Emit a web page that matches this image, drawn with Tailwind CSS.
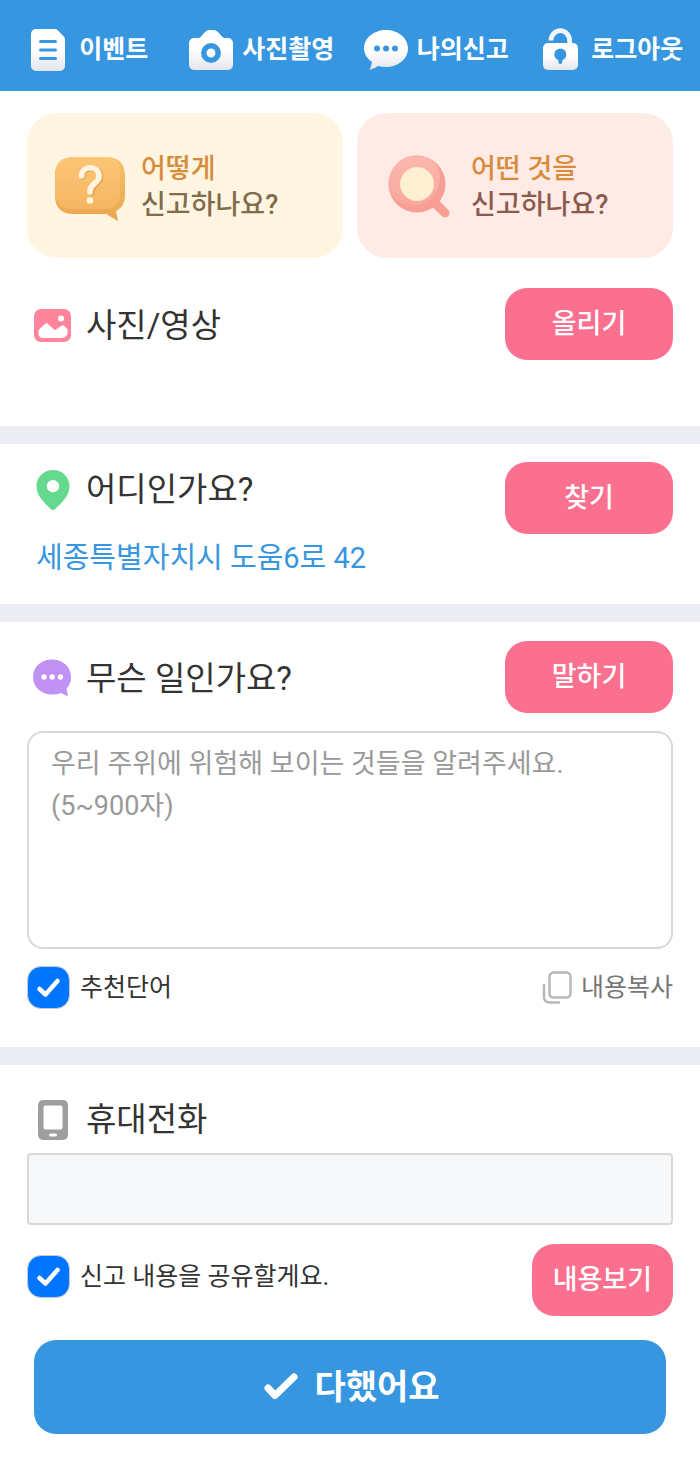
<!DOCTYPE html>
<html lang="ko">
<head>
  <meta charset="UTF-8" />
  <meta name="viewport" content="width=device-width, initial-scale=1.0" />
  <title>안전신고</title>
  <script src="https://cdn.jsdelivr.net/npm/@tailwindcss/browser@4"></script>
</head>
<body class="bg-white font-[Roboto,'Noto_Sans_CJK_KR',sans-serif] text-[#333333]">

  <!-- Top menu -->
  <header class="bg-[#3796e0] text-white">
    <nav class="grid h-[91px] grid-cols-4 pt-2 pr-[2px] text-[25px] font-bold whitespace-nowrap">
      <a href="#" class="flex items-center justify-center gap-[9px]">
        <svg class="h-[44px] w-[44px] shrink-0" viewBox="0 0 44 44" fill="none">
          <defs>
            <linearGradient id="white" x1="0" y1="0" x2="0" y2="1">
              <stop offset="0.5" stop-color="#ffffff" />
              <stop offset="1" stop-color="#e3e5ec" />
            </linearGradient>
          </defs>
          <path d="M10 1h18.500q2 0 3.400 1.400l5.700 5.800q1.400 1.400 1.400 3.400V38a5 5 0 0 1-5 5H10a5 5 0 0 1-5-5V6a5 5 0 0 1 5-5z" fill="url(#white)" />
          <path d="M14.500 13.500h15M14.500 22h15M14.500 30.500h15" stroke="#3796e0" stroke-width="3" stroke-linecap="round" />
        </svg>
        <span>이벤트</span>
      </a>
      <a href="#" class="flex items-center justify-center gap-[9px]">
        <svg class="h-[44px] w-[44px] shrink-0" viewBox="0 0 44 44" fill="none">
          <path d="M5 10h4q1.500 0 2.500-1l4.500-5q2-2 4.500-2h4q2.500 0 4.500 2l4.500 5q1 1 2.500 1h3a5 5 0 0 1 5 5v22a5 5 0 0 1-5 5H5a5 5 0 0 1-5-5V15a5 5 0 0 1 5-5z" fill="url(#white)" />
          <circle cx="22" cy="25" r="7.200" stroke="#3796e0" stroke-width="5.500" />
        </svg>
        <span>사진촬영</span>
      </a>
      <a href="#" class="flex items-center justify-center gap-[9px]">
        <svg class="h-[44px] w-[44px] shrink-0" viewBox="0 0 44 44">
          <path d="M22 2c12 0 22 8 22 18.500S34 39 22 39q-4.500 0-8-1-3 2.500-8.500 4 2-4 2.500-8Q0 28.500 0 20.500C0 10 10 2 22 2z" fill="url(#white)" />
          <g fill="#3796e0"><circle cx="13" cy="20.500" r="3" /><circle cx="22" cy="20.500" r="3" /><circle cx="31" cy="20.500" r="3" /></g>
        </svg>
        <span>나의신고</span>
      </a>
      <a href="#" class="flex items-center justify-center gap-[9px]">
        <svg class="h-[44px] w-[44px] shrink-0" viewBox="0 0 44 44" fill="none">
          <path d="M13 12.500a9.300 9.800 0 0 1 18.600 0V18" stroke="#f4f6fb" stroke-width="4.800" />
          <rect x="5" y="15" width="35" height="27" rx="5" fill="url(#white)" />
          <circle cx="22.300" cy="26.500" r="6" fill="#3796e0" />
          <path d="M22.300 28v6" stroke="#3796e0" stroke-width="4" stroke-linecap="round" />
        </svg>
        <span>로그아웃</span>
      </a>
    </nav>
  </header>

  <main>
    <!-- Guides and photo upload -->
    <section class="px-[27px] pt-[22px] pb-[66px]">
      <div class="grid grid-cols-2 gap-[14px] text-[27px] leading-[36px] font-medium whitespace-nowrap">
        <a href="#" class="flex h-[145px] items-center gap-4 rounded-[30px] bg-[#fff5e1] pt-[2px] pl-[27px]">
          <svg class="h-[71px] w-[71px] shrink-0" viewBox="0 0 71 71" fill="none">
            <defs>
              <linearGradient id="orange" x1="0" y1="0" x2="0" y2="1">
                <stop stop-color="#fdc577" />
                <stop offset="1" stop-color="#f5b662" />
              </linearGradient>
              <linearGradient id="orange-edge" x1="0" y1="0" x2="0" y2="1">
                <stop stop-color="#fabf70" />
                <stop offset="1" stop-color="#eaa64b" />
              </linearGradient>
            </defs>
            <path d="M20 6h32c12 0 19 6 19 18v19c0 9-3 14-9 17l2 10-12-7H20C8 63 1 57 1 45V24C1 12 8 6 20 6z" fill="url(#orange-edge)" />
            <path d="M20 6h30c11 0 16 6 16 16v20c0 10-5 16-16 16H18C9 58 3 54 1 45V24C1 12 8 6 20 6z" fill="url(#orange)" />
            <path d="M28.500 26c0-11 18-11 18 0 0 8-8.500 7-8.500 15v1" stroke="#eaa64b" stroke-width="5.500" stroke-linecap="round" />
            <path d="M27.500 25c0-11 17.500-11 17.500 0 0 8-9 7-9 15v1" stroke="#fff5e1" stroke-width="5.500" stroke-linecap="round" />
            <circle cx="36" cy="49.500" r="3.300" fill="#fff5e1" />
          </svg>
          <span><span class="text-[#d78c3c]">어떻게</span><br /><span class="text-[#7f6c4b]">신고하나요?</span></span>
        </a>
        <a href="#" class="flex h-[145px] items-center gap-4 rounded-[30px] bg-[#feebe6] pt-[2px] pl-[27px]">
          <svg class="h-[71px] w-[71px] shrink-0" viewBox="0 0 71 71" fill="none">
            <defs>
              <linearGradient id="coral" x1="0" y1="0" x2="0" y2="1">
                <stop stop-color="#fbb8ad" />
                <stop offset="1" stop-color="#f9a79d" />
              </linearGradient>
            </defs>
            <path d="M49 50l12 12" stroke="#f99e94" stroke-width="9" stroke-linecap="round" />
            <circle cx="33" cy="33" r="28.500" fill="#f99e94" />
            <path d="M31 4.600c14 0 25 9 25 22 0 16-12 28-27 28C14 54.600 4.600 44 4.600 32S15 4.600 31 4.600z" fill="url(#coral)" />
            <circle cx="33" cy="33" r="16.700" fill="#fff0d4" stroke="#fde3cb" />
          </svg>
          <span><span class="text-[#d78c3c]">어떤 것을</span><br /><span class="text-[#8c5a4d]">신고하나요?</span></span>
        </a>
      </div>

      <div class="mt-[30px] flex items-center justify-between">
        <h2 class="flex items-center gap-[14px] pt-[3px] pl-[6px] text-[33px] leading-[48px]">
          <svg class="h-[40px] w-[39px] shrink-0" viewBox="0 0 39 40">
            <rect x="1" y="3" width="37" height="33" rx="7" fill="#ff859c" />
            <circle cx="28" cy="12.500" r="3" fill="#fff" />
            <path d="M5.500 25q0-1 1-2l5.500-5q1.500-1.500 3 0l6 5.500q.8.800 1.600.2l6.400-4.200q1-.7 2 .2l3 3q.8 1 .8 2.300 0 7-6.300 7H10q-4.500 0-4.500-5z" fill="#fff" />
          </svg>
          사진/영상
        </h2>
        <button type="button" class="h-[72px] w-[168px] rounded-[22px] bg-[#fb6f8f] text-[27px] font-medium text-white">올리기</button>
      </div>
    </section>

    <!-- Location -->
    <section class="flex items-start justify-between border-t-[18px] border-[#ebedf2] px-[27px] pt-[18px] pb-[22px]">
      <div class="pt-1">
        <h2 class="flex items-center gap-[14px] pl-[6px] text-[33px] leading-[48px]">
          <svg class="h-[40px] w-[39px] shrink-0" viewBox="0 0 39 40">
            <path fill-rule="evenodd" d="M20 0c9.500 0 16.500 7 16.500 16.300 0 9-7 16-14.500 22.900q-2 1.600-4 0C10.500 32.300 3.500 25.300 3.500 16.300 3.500 7 10.500 0 20 0zm0 10a6.200 6.200 0 1 0 0 12.400A6.200 6.200 0 0 0 20 10z" fill="#65d98e" />
          </svg>
          어디인가요?
        </h2>
        <p class="mt-[20px] pl-[9px] text-[29px] leading-[48px] text-[#3796e0]">세종특별자치시 도움6로 42</p>
      </div>
      <button type="button" class="h-[72px] w-[168px] rounded-[22px] bg-[#fb6f8f] text-[27px] font-medium text-white">찾기</button>
    </section>

    <!-- Report text -->
    <section class="border-t-[18px] border-[#ebedf2] px-[27px] pt-[19px] pb-[38px]">
      <div class="flex items-center justify-between">
        <h2 class="pt-[3px] text-[33px] leading-[48px]">
          <label for="content" class="flex items-center gap-[14px] pl-[6px]">
            <svg class="h-[40px] w-[39px] shrink-0" viewBox="0 0 39 40">
              <path d="M19 .500c11 0 19 7.500 19 17.500 0 6-2 9-4.500 11.500l1.500 8-7-3.500q-4 1.500-9 1.500C8 35.500 0 28 0 18S8 .500 19 .500z" fill="#bf92f4" />
              <g fill="#fff"><circle cx="11" cy="18" r="2.700" /><circle cx="19.200" cy="18" r="2.700" /><circle cx="27.500" cy="18" r="2.700" /></g>
            </svg>
            무슨 일인가요?
          </label>
        </h2>
        <button type="button" class="h-[72px] w-[168px] rounded-[22px] bg-[#fb6f8f] text-[27px] font-medium text-white">말하기</button>
      </div>

      <textarea id="content" class="mt-[18px] block h-[218px] w-full resize-none rounded-[16px] border-2 border-[#d8d8d8] px-[22px] py-[10px] text-[27px] leading-[42px] placeholder:text-[#999999]" placeholder="우리 주위에 위험해 보이는 것들을 알려주세요.&#10;(5~900자)"></textarea>

      <div class="mt-[17px] flex items-center justify-between">
        <label class="flex items-center gap-[10px] text-[25px]">
          <span class="grid h-[43px] w-[43px]">
            <input type="checkbox" checked class="peer col-start-1 row-start-1 h-[43px] w-[43px] appearance-none rounded-[14px] border border-[#c5cbd3] checked:bg-[#0075ff]" />
            <svg class="invisible col-start-1 row-start-1 h-[43px] w-[43px] peer-checked:visible" viewBox="0 0 43 43" fill="none" stroke="#fff" stroke-width="4.500" stroke-linecap="round" stroke-linejoin="round"><path d="M12.500 23l6 5.500 12-13.500" /></svg>
          </span>
          추천단어
        </label>
        <button type="button" class="flex items-center gap-[9px] text-[25px] text-[#777777]">
          <svg class="h-[34px] w-[30px]" viewBox="0 0 30 34" fill="none" stroke="#b8b8b8" stroke-width="2.500" stroke-linecap="round">
            <rect x="7.500" y="1.500" width="21" height="25" rx="4" />
            <path d="M2 14V25.500q0 6 6 6h9" />
          </svg>
          내용복사
        </button>
      </div>
    </section>

    <!-- Phone and submit -->
    <section class="border-t-[18px] border-[#ebedf2] px-[27px] pt-[31px] pb-[23px]">
      <h2 class="text-[33px] leading-[48px]">
        <label for="phone" class="flex items-center gap-[14px] pl-[6px]">
          <svg class="h-[40px] w-[39px] shrink-0" viewBox="0 0 39 40">
            <rect x="5" y="0" width="30" height="40" rx="5" fill="#9e9e9e" />
            <rect x="10.500" y="5.500" width="19" height="24" rx="2" fill="#fff" />
            <rect x="16" y="33.500" width="8" height="3" rx="1.500" fill="#fff" />
          </svg>
          휴대전화
        </label>
      </h2>
      <input id="phone" type="tel" class="mt-[9px] block h-[72px] w-full rounded-[4px] border-2 border-[#d8d8d8] bg-[#f7f8fa] px-[22px] text-[27px]" />

      <div class="mt-[19px] flex items-start justify-between">
        <label class="flex items-center gap-[10px] pt-[11px] text-[25px]">
          <span class="grid h-[43px] w-[43px]">
            <input type="checkbox" checked class="peer col-start-1 row-start-1 h-[43px] w-[43px] appearance-none rounded-[14px] border border-[#c5cbd3] checked:bg-[#0075ff]" />
            <svg class="invisible col-start-1 row-start-1 h-[43px] w-[43px] peer-checked:visible" viewBox="0 0 43 43" fill="none" stroke="#fff" stroke-width="4.500" stroke-linecap="round" stroke-linejoin="round"><path d="M12.500 23l6 5.500 12-13.500" /></svg>
          </span>
          신고 내용을 공유할게요.
        </label>
        <button type="button" class="h-[72px] rounded-[22px] bg-[#fb6f8f] px-[21px] text-[27px] font-medium text-white">내용보기</button>
      </div>

      <div class="mt-6 px-[7px]">
        <button type="submit" class="flex h-[94px] w-full items-center justify-center gap-4 rounded-[22px] bg-[#3796e0] pl-1 text-[34px] font-bold text-white">
          <svg class="h-[28px] w-[34px]" viewBox="0 0 34 28" fill="none" stroke="#fff" stroke-width="7" stroke-linecap="round" stroke-linejoin="round"><path d="M4 15l7 7.500L30 4" /></svg>
          다했어요
        </button>
      </div>
    </section>
  </main>

</body>
</html>
